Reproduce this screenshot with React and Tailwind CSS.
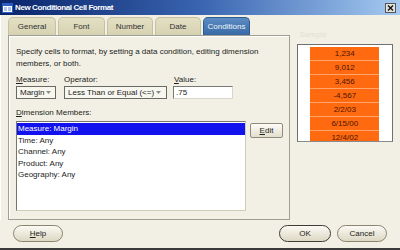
const sample = ['1,234', '9,012', '3,456', '-4,567', '2/2/03', '6/15/00', '12/4/02']
const members = ['Measure: Margin', 'Time: Any', 'Channel: Any', 'Product: Any', 'Geography: Any']
const tabs = [
  { label: 'General', w: 'w-[48px]' },
  { label: 'Font', w: 'w-[47px]' },
  { label: 'Number', w: 'w-[46px]' },
  { label: 'Date', w: 'w-[46px]' },
  { label: 'Conditions', w: 'w-[47px]', active: true },
]

function Arrow() {
  return (
    <svg width="5" height="3" viewBox="0 0 5 3" className="shrink-0">
      <path d="M0 0h5L2.5 3z" fill="#8a8a86" />
    </svg>
  )
}

function TitleBar() {
  return (
    <div className="h-[15px] flex items-center bg-gradient-to-r from-[#0a246a] via-[#3a64b0] to-[#a6caf0] pl-[2px] pr-[4px]">
      <svg width="11" height="10" viewBox="0 0 11 10" className="shrink-0">
        <rect x="0.5" y="0.5" width="10" height="9" fill="#fff" stroke="#2a5bc0" />
        <rect x="1" y="1" width="9" height="2" fill="#2a5bc0" />
        <path d="M2 5h3M2 7h3M6 5h3M6 7h3" stroke="#5d8ad8" />
      </svg>
      <span className="ml-[2px] text-white font-bold text-[8px] tracking-[-0.4px]">New Conditional Cell Format</span>
      <div className="ml-auto w-[11px] h-[10px] bg-[#e4e2dc] border border-[#555] flex items-center justify-center">
        <svg width="7" height="6" viewBox="0 0 7 6">
          <path d="M1 0.5l5 5M6 0.5l-5 5" stroke="#111" strokeWidth="1.4" />
        </svg>
      </div>
    </div>
  )
}

function Tabs() {
  return (
    <div className="h-[18px] flex gap-[2px] items-end">
      {tabs.map((t) => (
        <div
          key={t.label}
          className={
            t.active
              ? `${t.w} h-[18px] rounded-t-[5px] bg-gradient-to-b from-[#5b8cc4] to-[#3a6aa4] border border-b-0 border-[#2e5b92] text-[#f2f5fb] flex items-center justify-center`
              : `${t.w} h-[18px] rounded-t-[5px] bg-gradient-to-b from-[#e3dfc3] to-[#d6d2b1] border border-b-0 border-[#c4c0a0] text-[#333] flex items-center justify-center`
          }
        >
          {t.label}
        </div>
      ))}
    </div>
  )
}

function Panel() {
  return (
    <div className="flex-1 border border-[#a09f96] shadow-[inset_1px_1px_0_#ffffff] pl-[7px] pt-[10px] flex flex-col">
      <p className="leading-[12px] w-[250px]">
        Specify cells to format, by setting a data condition, editing dimension members, or both.
      </p>
      <div className="mt-[5px] flex">
        <div className="w-[48px] flex flex-col">
          <div className="h-[10px] leading-[10px]"><u>M</u>easure:</div>
          <div className="mt-[1px] w-[40px] h-[13px] border border-[#6a6a64] bg-[#f8f7ef] flex items-center justify-between pl-[3px] pr-[4px]">
            <span>Margin</span>
            <Arrow />
          </div>
        </div>
        <div className="w-[109px] flex flex-col">
          <div className="h-[10px] leading-[10px]">Operator:</div>
          <div className="mt-[1px] w-[103px] h-[13px] border border-[#6a6a64] bg-[#f8f7ef] flex items-center justify-between pl-[3px] pr-[5px]">
            <span>Less Than or Equal (&lt;=)</span>
            <Arrow />
          </div>
        </div>
        <div className="flex flex-col">
          <div className="h-[10px] leading-[10px] pl-[1px]"><u>V</u>alue:</div>
          <div className="mt-[1px] w-[60px] h-[13px] border border-[#7a7a74] border-b-[#d8d6cc] border-r-[#d8d6cc] bg-white flex items-center pl-[2px]">
            .75
          </div>
        </div>
      </div>
      <div className="mt-[9px] h-[10px] leading-[10px]"><u>D</u>imension Members:</div>
      <div className="mt-[3px] flex items-start">
        <div className="w-[230px] h-[90px] border border-[#77766a] border-b-[#cfccba] border-r-[#cfccba] bg-white pt-[1px]">
          {members.map((m, i) => (
            <div
              key={m}
              className={i === 0 ? 'h-[11.5px] leading-[11.5px] pl-[1px] bg-[#1212ee] text-white' : 'h-[11.5px] leading-[11.5px] pl-[1px]'}
            >
              {m}
            </div>
          ))}
        </div>
        <button className="ml-[4px] mt-[2px] w-[33px] h-[15px] rounded-[2px] border border-[#8f8c7d] bg-gradient-to-b from-[#fdfcf8] to-[#e2dfcc] text-[8px] flex items-center justify-center">
          <span><u>E</u>dit</span>
        </button>
      </div>
    </div>
  )
}

function Preview() {
  return (
    <div className="mt-[4px] h-[98px] border border-[#707070] border-b-[#8a8a8a] bg-white pt-[2px] overflow-hidden">
      <div className="mx-auto w-[69px] bg-[#ff6a10]">
        {sample.map((v) => (
          <div key={v} className="h-[14px] leading-[13px] text-center text-[#4a1400] border-b border-[#ffa56c]">
            {v}
          </div>
        ))}
      </div>
    </div>
  )
}

function Footer() {
  const btn = 'h-[17px] rounded-full bg-gradient-to-b from-[#fbfaf4] to-[#dcd8c3] flex items-center justify-center text-[8px] text-[#222]'
  return (
    <div className="h-[28px] flex items-start pt-[5px] px-[13px]">
      <button className={`${btn} w-[50px] border border-[#8a8470]`}>
        <span><u>H</u>elp</span>
      </button>
      <button className={`${btn} ml-auto w-[52px] border-[1.5px] border-[#3e3c34]`}>OK</button>
      <button className={`${btn} ml-[6px] w-[50px] border border-[#8a8470]`}>Cancel</button>
    </div>
  )
}

export default function App() {
  return (
    <div className="w-[400px] h-[250px] overflow-hidden flex flex-col bg-[#f2f0e4] font-['Liberation_Sans',Arial,sans-serif] text-[8px] text-[#1c1c1c] border-b-2 border-[#3a3a3a]">
      <TitleBar />
      <div className="flex flex-1 min-h-0 px-[7px] pt-[2px] border-l border-white">
        <div className="w-[283px] flex flex-col">
          <Tabs />
          <Panel />
        </div>
        <div className="ml-[7px] w-[97px] flex flex-col">
          <div className="mt-[13px] h-[10px] leading-[10px] pl-[3px] text-[#e2dfd2]">Sample</div>
          <Preview />
        </div>
      </div>
      <Footer />
    </div>
  )
}
